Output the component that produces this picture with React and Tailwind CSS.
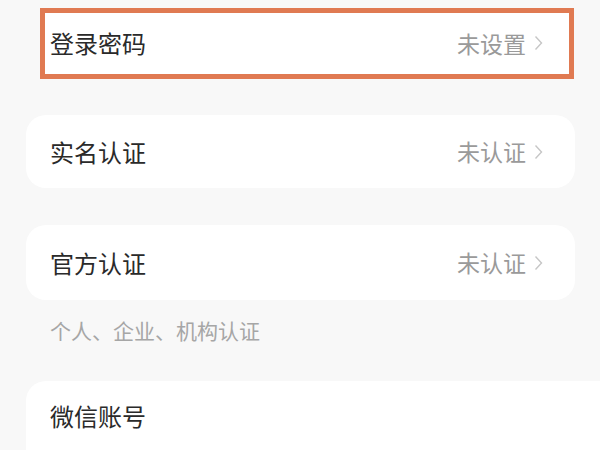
const FONT = { fontFamily: '"Noto Sans CJK SC", "Noto Sans", sans-serif' }

function Chevron() {
  return (
    <svg width="9" height="16" viewBox="0 0 9 16" fill="none" className="ml-[8px]">
      <polyline points="1.5,1.5 7.5,8 1.5,14.5" stroke="#c6c6c6" strokeWidth="1.4" />
    </svg>
  )
}

function Row({ label, value, pr = 'pr-[32px]' }) {
  return (
    <div className={`flex items-center justify-between h-full pl-[24px] ${pr}`}>
      <span className="text-[24px] text-[#2a2a2a] leading-none">{label}</span>
      {value && (
        <span className="flex items-center text-[23px] text-[#9a9a9a] leading-none">
          {value}
          <Chevron />
        </span>
      )}
    </div>
  )
}

export default function App() {
  return (
    <div className="w-[600px] h-[450px] bg-[#f8f8f8] overflow-hidden" style={FONT}>
      {/* login password, highlighted */}
      <div className="ml-[40px] mt-[8px] w-[534px] h-[71px] bg-white border-[5px] border-[#e07a52]">
        <div className="h-full -ml-[19px] pb-[1px]">
          <Row label="登录密码" value="未设置" pr="pr-[26px]" />
        </div>
      </div>

      <div className="ml-[26px] mt-[36px] w-[549px] h-[73px] bg-white rounded-[20px]">
        <Row label="实名认证" value="未认证" />
      </div>

      <div className="ml-[26px] mt-[37px] w-[549px] h-[75px] bg-white rounded-[20px]">
        <Row label="官方认证" value="未认证" />
      </div>

      <p className="pl-[50px] pt-[17px] text-[21px] leading-[26px] text-[#a6a6a6]">个人、企业、机构认证</p>

      <div className="ml-[26px] mt-[38px] h-[80px] bg-white rounded-tl-[20px]">
        <div className="h-[70px]">
          <Row label="微信账号" />
        </div>
      </div>
    </div>
  )
}
